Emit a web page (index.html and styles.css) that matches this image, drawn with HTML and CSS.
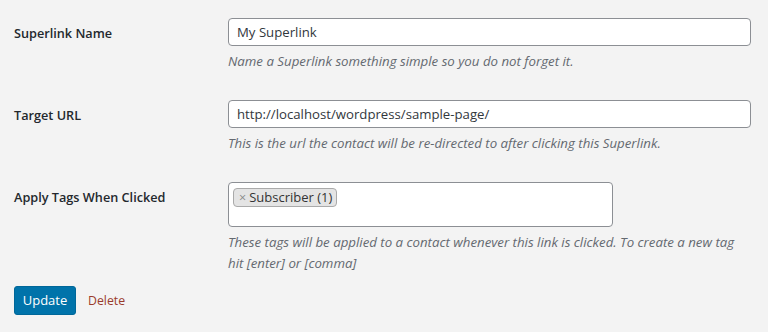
FILE: index.html
```html
<!DOCTYPE html>
<html>
<head>
<meta charset="utf-8">
<link rel="stylesheet" href="styles.css">
</head>
<body>
<form class="form">
  <div class="row">
    <label class="label">Superlink Name</label>
    <div class="field">
      <div class="input wide">My Superlink</div>
      <p class="desc">Name a Superlink something simple so you do not forget it.</p>
    </div>
  </div>
  <div class="row">
    <label class="label">Target URL</label>
    <div class="field">
      <div class="input wide">http://localhost/wordpress/sample-page/</div>
      <p class="desc">This is the url the contact will be re-directed to after clicking this Superlink.</p>
    </div>
  </div>
  <div class="row">
    <label class="label">Apply Tags When Clicked</label>
    <div class="field">
      <div class="tagbox"><span class="chip"><span class="x">×</span>Subscriber (1)</span></div>
      <p class="desc">These tags will be applied to a contact whenever this link is clicked. To create a new tag<br>hit [enter] or [comma]</p>
    </div>
  </div>
  <div class="actions">
    <span class="btn">Update</span>
    <span class="del">Delete</span>
  </div>
</form>
</body>
</html>
```
FILE: styles.css
```css
html, body {
  margin: 0;
  background: #f3f3f3;
}
body {
  font-family: "Open Sans", "Noto Sans", sans-serif;
  font-size: 13px;
  color: #23282d;
}
.form {
  padding: 18px 0 0 14px;
}
.row {
  display: flex;
  margin-bottom: 28px;
}
.label {
  width: 214px;
  flex: none;
  font-weight: 600;
  font-size: 12.7px;
  line-height: 28px;
  padding-top: 1px;
}
.field {
  flex: none;
}
.input {
  box-sizing: border-box;
  height: 28px;
  border: 1px solid #8c8f94;
  border-radius: 4px;
  background: #fff;
  padding: 0 8px;
  line-height: 26px;
  color: #32373c;
  font-size: 13.2px;
}
.wide {
  width: 523px;
}
.desc {
  margin: 5px 0 0;
  font-style: italic;
  color: #646970;
  line-height: 21px;
  font-size: 13.25px;
}
.tagbox {
  box-sizing: border-box;
  width: 385px;
  height: 45px;
  border: 1px solid #8c8f94;
  border-radius: 4px;
  background: #fff;
  padding: 5px 4px;
}
.chip {
  display: inline-block;
  height: 19px;
  line-height: 17px;
  box-sizing: border-box;
  border: 1px solid #aaa;
  border-radius: 4px;
  background: #e4e4e4;
  padding: 0 4px 0 5px;
  color: #333;
  font-size: 13px;
}
.x {
  color: #888;
  margin-right: 3px;
  font-size: 12.5px;
}
.actions {
  display: flex;
  align-items: center;
  margin-top: -16px;
}
.btn {
  box-sizing: border-box;
  width: 62px;
  height: 29px;
  line-height: 27px;
  text-align: center;
  background: #0073aa;
  border: 1px solid #006799;
  border-radius: 3px;
  color: #fff;
  font-size: 13px;
}
.del {
  margin-left: 12px;
  color: #9a3b2c;
  font-size: 12.3px;
  font-weight: 500;
}
```
